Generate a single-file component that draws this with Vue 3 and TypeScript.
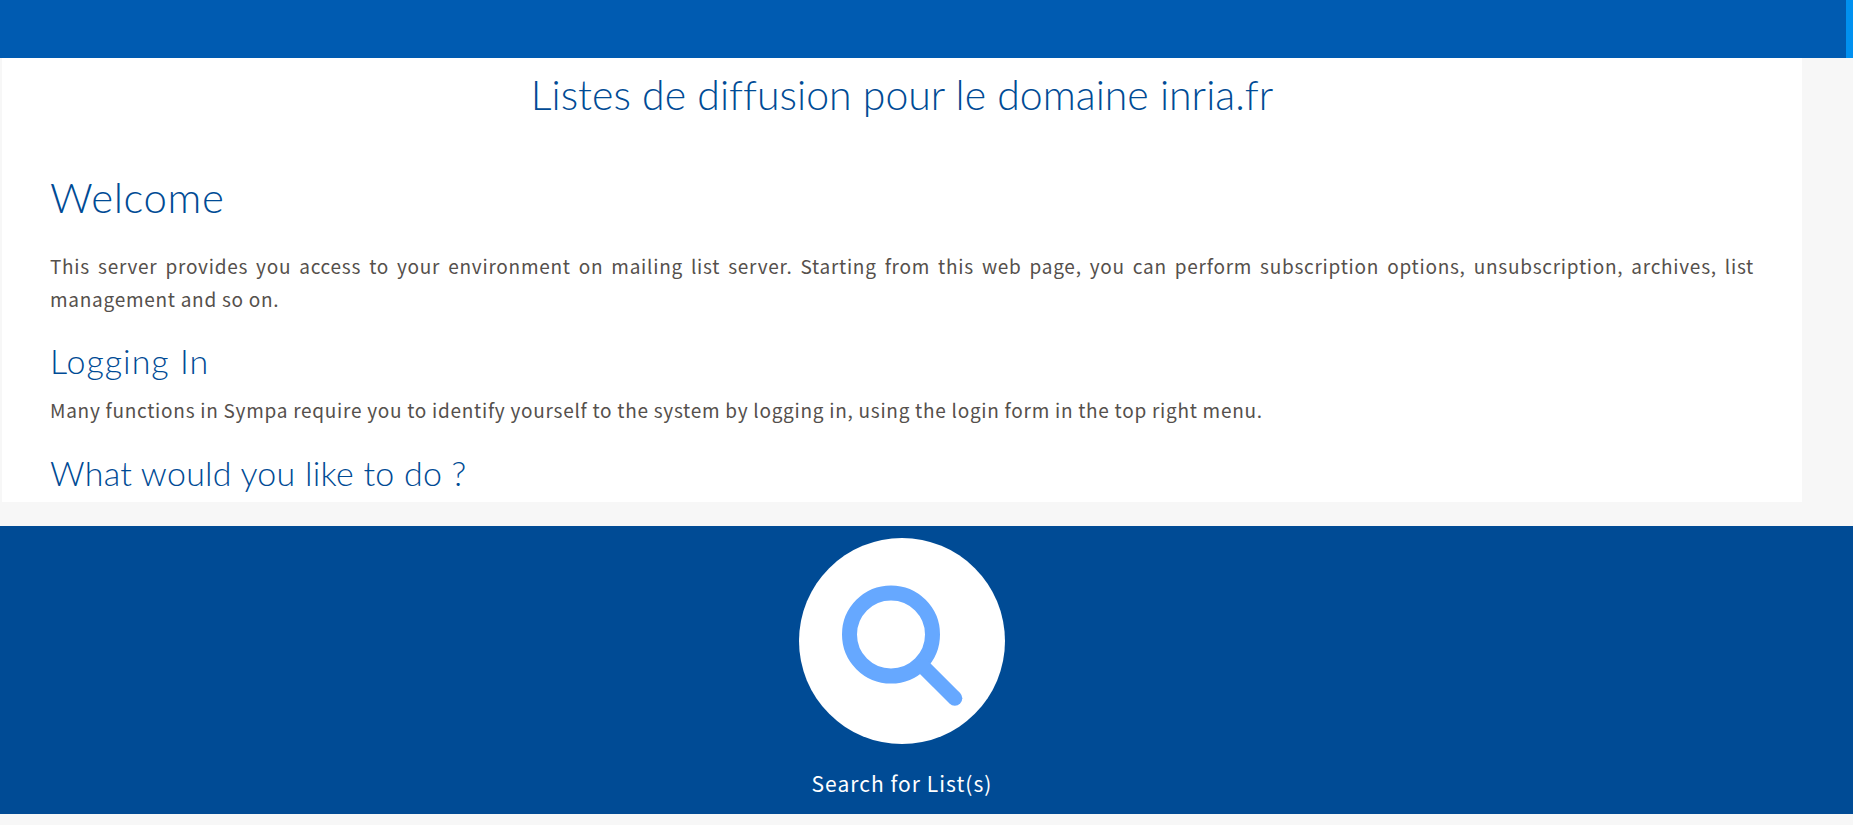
<script setup lang="ts">
const title = 'Listes de diffusion pour le domaine inria.fr'
</script>

<template>
  <div class="page">
    <header class="topbar"><span class="topbar-edge"></span></header>
    <main class="content">
      <h1 class="title">{{ title }}</h1>
      <h2 class="welcome">Welcome</h2>
      <p class="intro">This server provides you access to your environment on mailing list server. Starting from this web page, you can perform subscription options, unsubscription, archives, list management and so on.</p>
      <h3 class="sub logging">Logging In</h3>
      <p class="login">Many functions in Sympa require you to identify yourself to the system by logging in, using the login form in the top right menu.</p>
      <h3 class="sub last">What would you like to do ?</h3>
    </main>
    <section class="band">
      <div class="action">
        <div class="circle">
          <svg class="lens" width="206" height="206" viewBox="0 0 206 206" aria-hidden="true">
            <circle cx="92" cy="96.5" r="41.5" fill="none" stroke="#66a8ff" stroke-width="15" />
            <path d="M124 128.5 L155.8 160.3" fill="none" stroke="#66a8ff" stroke-width="15" stroke-linecap="round" />
          </svg>
        </div>
        <span class="label">Search for List(s)</span>
      </div>
    </section>
  </div>
</template>

<style>
html, body { margin: 0; background: #f7f7f7; }
</style>

<style scoped>
.page {
  min-height: 825px;
  background: #f7f7f7;
  font-family: "Noto Sans CJK KR", "Noto Sans", sans-serif;
  overflow: hidden;
}
.topbar {
  height: 58px;
  background: #005bb1;
  display: flex;
  justify-content: flex-end;
}
.topbar-edge {
  width: 7px;
  background: #0090f0;
}
.content {
  width: 1800px;
  height: 444px;
  margin-left: 2px;
  padding: 0 48px;
  box-sizing: border-box;
  background: #fff;
  overflow: hidden;
}
.title, .welcome, .sub {
  margin: 0;
  font-family: Lato, sans-serif;
  font-weight: 300;
  color: #004b95;
}
.title {
  font-size: 41px;
  line-height: 54px;
  padding-top: 10px;
  text-align: center;
  letter-spacing: 0.02px;
}
.welcome {
  font-size: 42px;
  line-height: 50px;
  margin-top: 50px;
  letter-spacing: 0.6px;
}
.intro, .login {
  margin: 0;
  font-size: 19px;
  letter-spacing: 0.73px;
  line-height: 33px;
  color: #55504c;
}
.intro {
  margin-top: 27px;
  text-align: justify;
}
.sub {
  font-size: 34px;
  line-height: 40px;
}
.logging {
  margin-top: 26px;
  letter-spacing: 1px;
}
.login { margin-top: 12px; }
.sub.last {
  margin-top: 27px;
  letter-spacing: 0.25px;
}
.band {
  height: 288px;
  margin-top: 24px;
  padding-right: 49px;
  background: #004b95;
  display: flex;
  justify-content: center;
}
.action {
  display: flex;
  flex-direction: column;
  align-items: center;
}
.circle {
  width: 206px;
  height: 206px;
  margin-top: 12px;
  border-radius: 50%;
  background: #fff;
}
.lens { display: block; }
.label {
  margin-top: 22px;
  font-size: 21px;
  letter-spacing: 1.03px;
  line-height: 34px;
  color: #fff;
}
</style>
